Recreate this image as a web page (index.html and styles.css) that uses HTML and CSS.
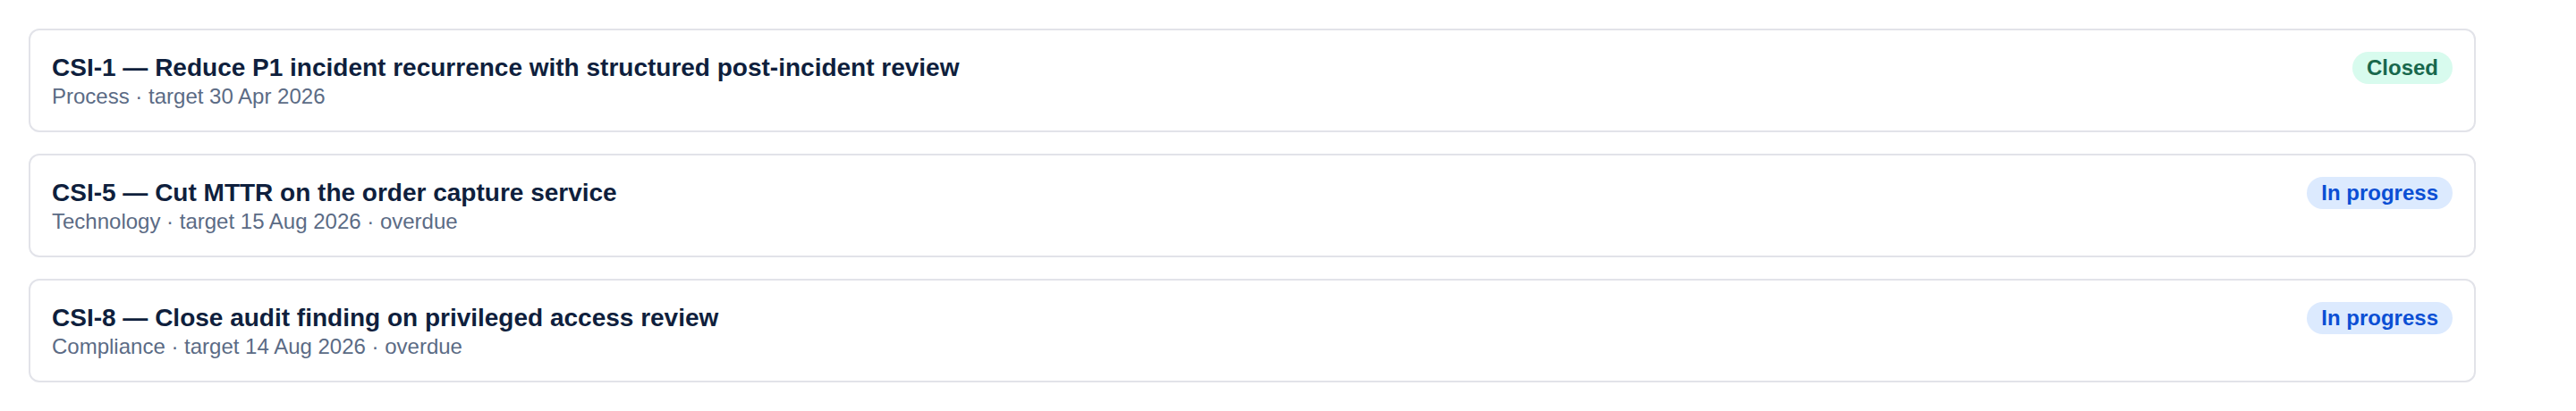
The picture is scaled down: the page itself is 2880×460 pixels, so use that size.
FILE: index.html
```html
<!DOCTYPE html>
<html lang="en">
<head>
<meta charset="utf-8">
<title>CSI register</title>
<link rel="stylesheet" href="styles.css">
</head>
<body>
<main class="list">
  <article class="card">
    <div class="info">
      <div class="title">CSI-1 — Reduce P1 incident recurrence with structured post-incident review</div>
      <div class="meta">Process · target 30 Apr 2026</div>
    </div>
    <span class="badge badge-closed">Closed</span>
  </article>
  <article class="card">
    <div class="info">
      <div class="title">CSI-5 — Cut MTTR on the order capture service</div>
      <div class="meta">Technology · target 15 Aug 2026 · overdue</div>
    </div>
    <span class="badge badge-progress">In progress</span>
  </article>
  <article class="card">
    <div class="info">
      <div class="title">CSI-8 — Close audit finding on privileged access review</div>
      <div class="meta">Compliance · target 14 Aug 2026 · overdue</div>
    </div>
    <span class="badge badge-progress">In progress</span>
  </article>
</main>
</body>
</html>
```

FILE: styles.css
```css
html, body {
  margin: 0;
  padding: 0;
  background: #ffffff;
}

body {
  font-family: "Liberation Sans", Arial, sans-serif;
}

.list {
  width: 2736px;
  padding: 32px;
  display: flex;
  flex-direction: column;
  gap: 24px;
}

.card {
  display: flex;
  justify-content: space-between;
  align-items: flex-start;
  border: 2px solid #e2e3e9;
  border-radius: 12px;
  padding: 24px;
  background: #ffffff;
}

.title {
  font-size: 28px;
  line-height: 36px;
  font-weight: 700;
  color: #0f1f3d;
}

.meta {
  font-size: 24px;
  line-height: 28px;
  color: #5b6b85;
}

.badge {
  font-weight: 700;
  font-size: 24px;
  line-height: 24px;
  padding: 6px 16px;
  border-radius: 999px;
  white-space: nowrap;
}

.badge-closed {
  background: #d8fbee;
  color: #17674c;
}

.badge-progress {
  background: #dceafe;
  color: #0b4fd4;
}
```
